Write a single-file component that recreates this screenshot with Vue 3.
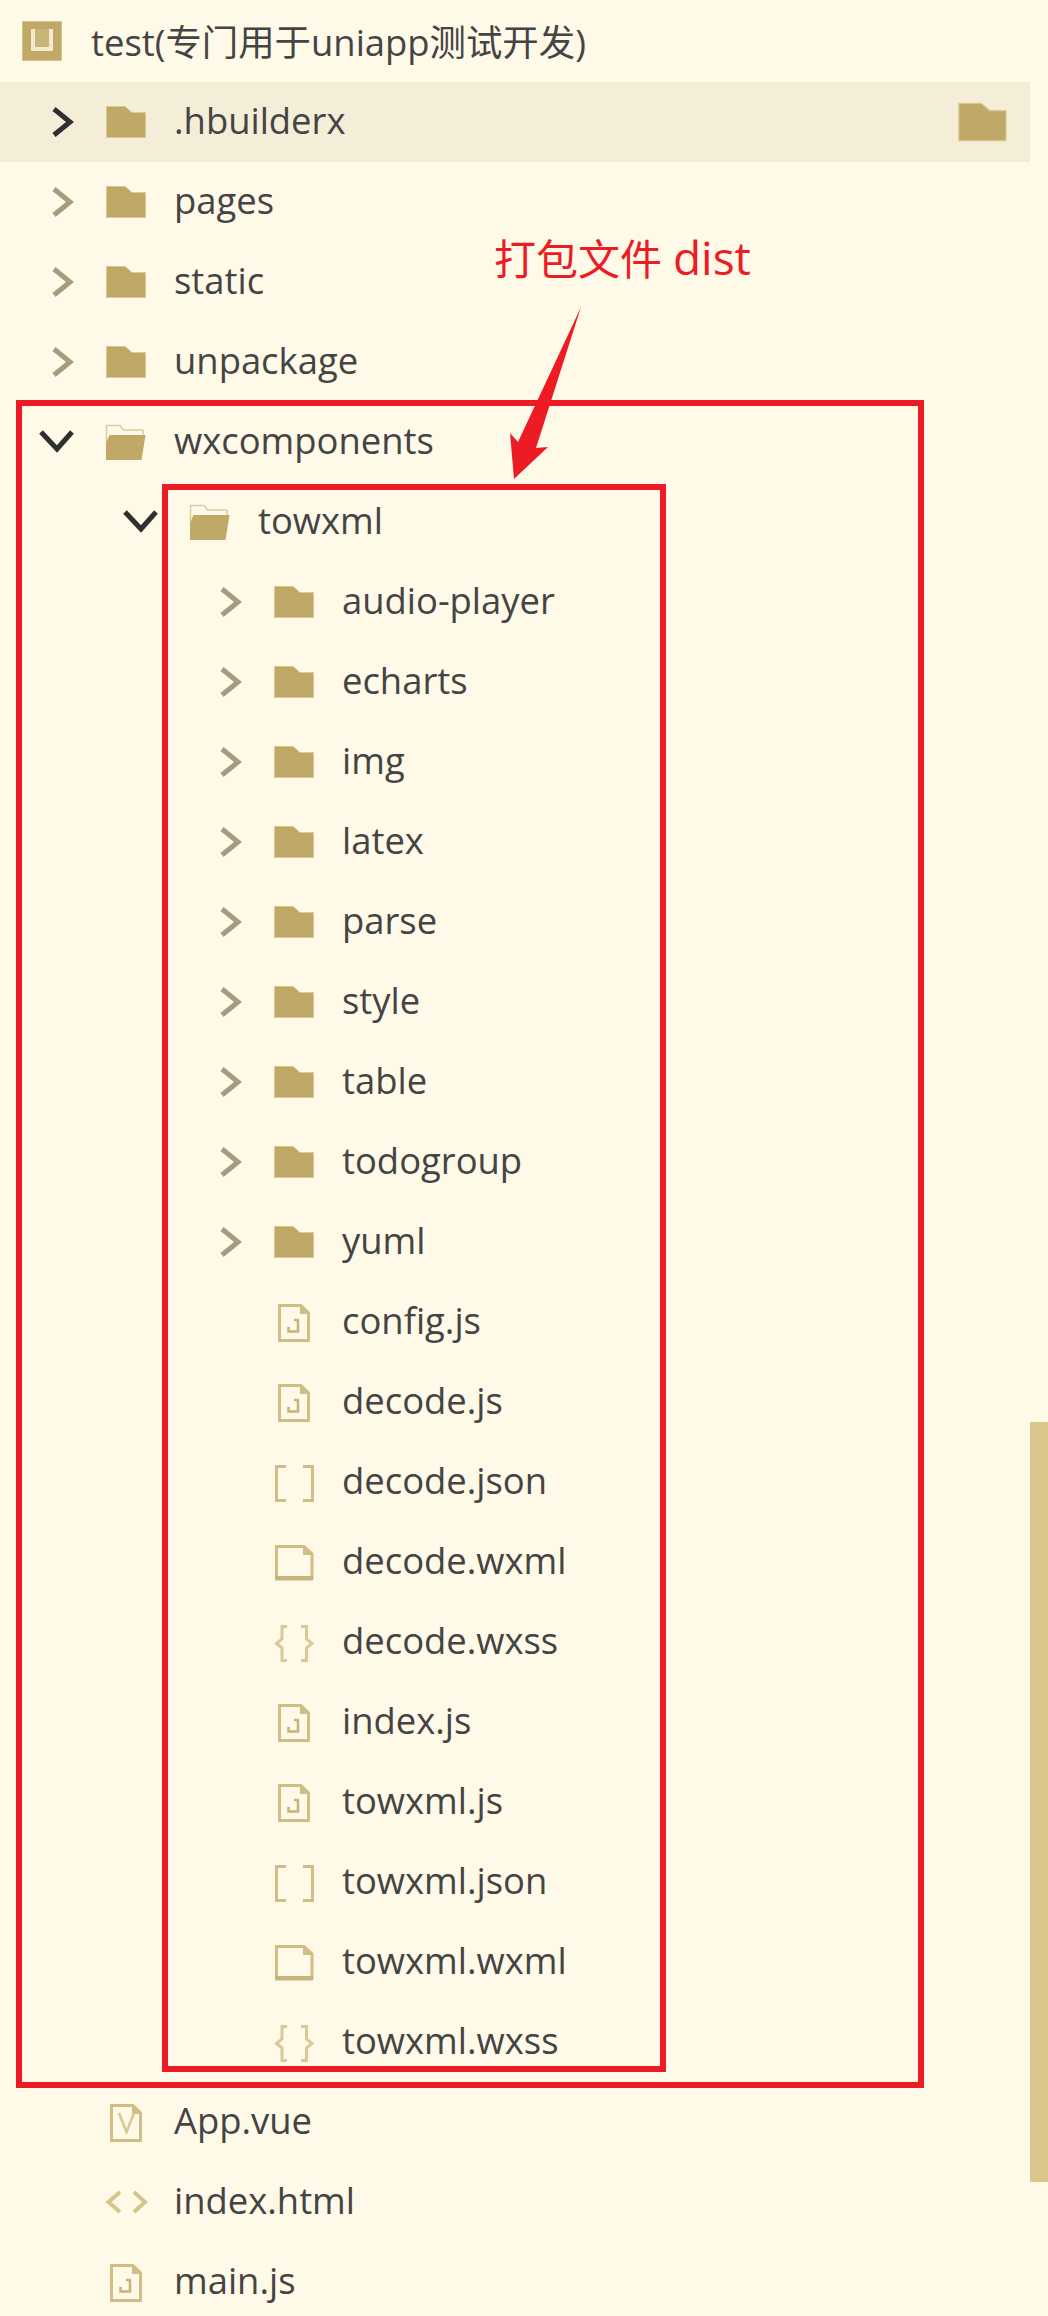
<script setup>
const rows = [
  { name: '.hbuilderx', level: 0, type: 'closed', active: true },
  { name: 'pages', level: 0, type: 'closed' },
  { name: 'static', level: 0, type: 'closed' },
  { name: 'unpackage', level: 0, type: 'closed' },
  { name: 'wxcomponents', level: 0, type: 'open' },
  { name: 'towxml', level: 1, type: 'open' },
  { name: 'audio-player', level: 2, type: 'closed' },
  { name: 'echarts', level: 2, type: 'closed' },
  { name: 'img', level: 2, type: 'closed' },
  { name: 'latex', level: 2, type: 'closed' },
  { name: 'parse', level: 2, type: 'closed' },
  { name: 'style', level: 2, type: 'closed' },
  { name: 'table', level: 2, type: 'closed' },
  { name: 'todogroup', level: 2, type: 'closed' },
  { name: 'yuml', level: 2, type: 'closed' },
  { name: 'config.js', level: 2, type: 'js' },
  { name: 'decode.js', level: 2, type: 'js' },
  { name: 'decode.json', level: 2, type: 'json' },
  { name: 'decode.wxml', level: 2, type: 'wxml' },
  { name: 'decode.wxss', level: 2, type: 'wxss' },
  { name: 'index.js', level: 2, type: 'js' },
  { name: 'towxml.js', level: 2, type: 'js' },
  { name: 'towxml.json', level: 2, type: 'json' },
  { name: 'towxml.wxml', level: 2, type: 'wxml' },
  { name: 'towxml.wxss', level: 2, type: 'wxss' },
  { name: 'App.vue', level: 0, type: 'vue' },
  { name: 'index.html', level: 0, type: 'html' },
  { name: 'main.js', level: 0, type: 'js' }
]
</script>

<template>
  <div class="explorer">
    <div class="header">
      <svg class="logo" width="40" height="40" viewBox="0 0 40 40">
        <rect x="0.5" y="0.5" width="39" height="39" fill="#c0a968" stroke="#d6c48f" />
        <path d="M11 8 V28 H29 V8" fill="none" stroke="#f3ead0" stroke-width="4" />
        <path d="M13 8 H27 V26 H13 Z" fill="#c9b47a" />
      </svg>
      <span class="header-title">test(专门用于uniapp测试开发)</span>
    </div>

    <div
      v-for="row in rows"
      :key="row.name"
      class="row"
      :class="['level-' + row.level, { active: row.active }]"
    >
      <svg class="chevron" width="36" height="36" viewBox="0 0 36 36">
        <path v-if="row.type === 'closed'" d="M16 5 L32 18 L16 31" class="chev-line" :class="{ dark: row.active }" />
        <path v-else-if="row.type === 'open'" d="M3 8 L19 25 L34 8" class="chev-line dark" />
      </svg>

      <svg class="icon" width="48" height="48" viewBox="0 0 48 48">
        <path v-if="row.type === 'closed'" d="M6.5 8.5 H25 L32 14.5 H45.5 V39.5 H6.5 Z" fill="#c0a968" stroke="#d9c892" />
        <template v-else-if="row.type === 'open'">
          <path d="M6.5 26 V7.5 H20 L23.5 12 H43 V18" fill="#fff9e8" stroke="#dccd9f" stroke-width="1.6" />
          <path d="M6 25 L9.5 17 H45.5 L41.5 42 H6 Z" fill="#c0a968" />
        </template>
        <template v-else-if="row.type === 'js' || row.type === 'vue'">
          <path d="M11.5 7.5 H33 L40.5 15 V42.5 H11.5 Z" fill="none" stroke="#d2bd86" stroke-width="3" />
          <path d="M32 7 V16 H41 Z" fill="#d2bd86" />
          <path v-if="row.type === 'js'" d="M20.5 29 V33.5 H30 V22 M26 22 H31" fill="none" stroke="#c7b37c" stroke-width="2.6" />
          <path v-else d="M19 15 L26.5 34 L34 15" fill="none" stroke="#d8c894" stroke-width="2.6" />
        </template>
        <path v-else-if="row.type === 'json'" d="M18 8.5 H8.5 V42.5 H18 M35 8.5 H44.5 V42.5 H35" fill="none" stroke="#d2bd86" stroke-width="3" />
        <template v-else-if="row.type === 'wxml'">
          <path d="M8.5 8.5 H36 L44 16 V40 H8.5 Z" fill="none" stroke="#d2bd86" stroke-width="3" />
          <path d="M35 7 V17 H45 Z" fill="#d2bd86" />
          <rect x="7" y="38" width="38" height="4.5" fill="#c7b37c" />
        </template>
        <path v-else-if="row.type === 'wxss'" d="M19 8.5 H14 V21 L8.5 25.5 L14 30 V42.5 H19 M33 8.5 H38.5 V21 L44 25.5 L38.5 30 V42.5 H33" fill="none" stroke="#d9c998" stroke-width="3" />
        <path v-else-if="row.type === 'html'" d="M20 14 L8.5 24 L20 34 M34 14 L45 24 L34 34" fill="none" stroke="#d5c48e" stroke-width="4" />
      </svg>

      <span class="name">{{ row.name }}</span>

      <svg v-if="row.active" class="marker" width="58" height="58" viewBox="0 0 48 48">
        <path d="M6.5 8.5 H25 L32 14.5 H45.5 V39.5 H6.5 Z" fill="#c0a968" stroke="#d9c892" />
      </svg>
    </div>

    <div class="scrollbar"></div>
    <div class="outline outline-outer"></div>
    <div class="outline outline-inner"></div>
    <div class="annotation">打包文件 <span class="annotation-latin">dist</span></div>
    <svg class="arrow" width="1048" height="600" viewBox="0 0 1048 600">
      <polygon points="581,307 536,448 548,447 514,479 510,433 518,442" fill="#ed1c24" />
    </svg>
  </div>
</template>

<style scoped>
.explorer {
  position: relative;
  width: 1048px;
  height: 2316px;
  overflow: hidden;
  background: #fff9e8;
  color: #444444;
  font-family: "Open Sans", "Noto Sans CJK SC", sans-serif;
  font-size: 36.4px;
}
.header {
  display: flex;
  align-items: center;
  height: 82px;
  padding-left: 22px;
  box-sizing: border-box;
}
.logo {
  flex: none;
}
.header-title {
  margin-left: 29px;
  white-space: nowrap;
  position: relative;
  top: -1px;
}
.row {
  display: flex;
  align-items: center;
  width: 1030px;
  height: 80px;
  box-sizing: border-box;
}
.level-0 { padding-left: 38px; }
.level-1 { padding-left: 122px; }
.level-2 { padding-left: 206px; }
.active {
  background: #f4edd8;
}
.chevron {
  flex: none;
}
.chev-line {
  fill: none;
  stroke: #a89c80;
  stroke-width: 5;
}
.chev-line.dark {
  stroke: #2f2f2f;
}
.icon {
  flex: none;
  margin-left: 26px;
}
.name {
  margin-left: 26px;
  white-space: nowrap;
  position: relative;
  top: -2px;
}
.marker {
  flex: none;
  margin-left: auto;
  margin-right: 21px;
}
.scrollbar {
  position: absolute;
  left: 1030px;
  top: 1422px;
  width: 18px;
  height: 760px;
  background: #d9c68b;
}
.outline {
  position: absolute;
  box-sizing: border-box;
  border: 6px solid #ed1c24;
}
.outline-outer {
  left: 16px;
  top: 400px;
  width: 908px;
  height: 1688px;
}
.outline-inner {
  left: 162px;
  top: 484px;
  width: 504px;
  height: 1588px;
}
.annotation {
  position: absolute;
  left: 494px;
  top: 228px;
  color: #ed1c24;
  font-size: 42px;
  line-height: 58px;
  white-space: nowrap;
}
.annotation-latin {
  font-size: 46px;
}
.arrow {
  position: absolute;
  left: 0;
  top: 0;
}
</style>

<style>
body {
  background: #fff9e8;
}
</style>
